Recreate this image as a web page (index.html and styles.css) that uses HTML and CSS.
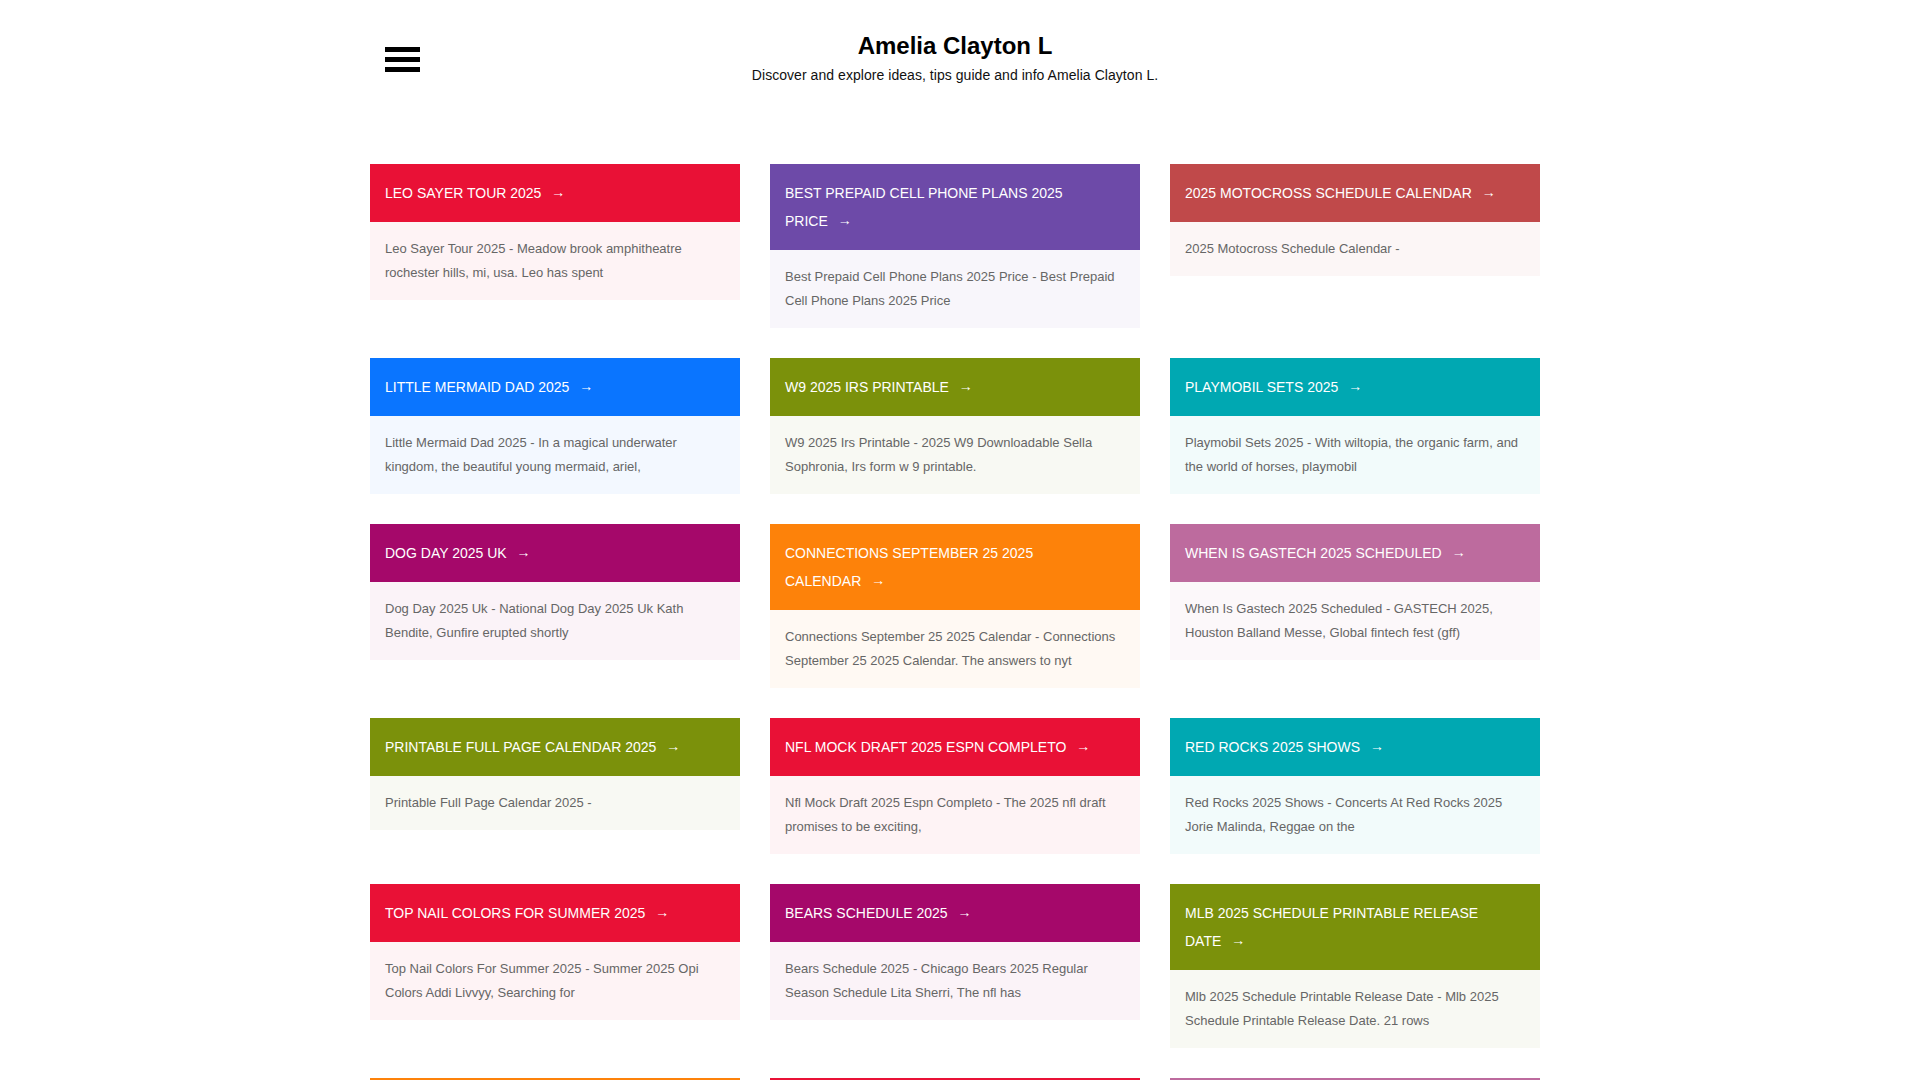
FILE: index.html
```html
<!DOCTYPE html>
<html lang="en">

<head>
  <meta charset="UTF-8" />
  <title>Amelia Clayton L</title>
  <link rel="stylesheet" href="styles.css">
</head>

<body>
  <div class="container">
    <header class="site-header">
      <a class="menu-toggle" href="#" aria-label="Menu">
        <span></span>
        <span></span>
        <span></span>
      </a>
      <div class="brand">
        <h1 class="site-title">Amelia Clayton L</h1>
        <p class="site-desc">Discover and explore ideas, tips guide and info Amelia Clayton L.</p>
      </div>
    </header>

    <main class="posts">
      <article class="post c-red">
        <a class="post-title" href="#">LEO SAYER TOUR 2025 <span class="arrow">→</span></a>
        <p class="post-excerpt">Leo Sayer Tour 2025 - Meadow brook amphitheatre rochester hills, mi, usa. Leo has spent</p>
      </article>
      <article class="post c-purple">
        <a class="post-title" href="#">BEST PREPAID CELL PHONE PLANS 2025 PRICE <span class="arrow">→</span></a>
        <p class="post-excerpt">Best Prepaid Cell Phone Plans 2025 Price - Best Prepaid Cell Phone Plans 2025 Price</p>
      </article>
      <article class="post c-indian">
        <a class="post-title" href="#">2025 MOTOCROSS SCHEDULE CALENDAR <span class="arrow">→</span></a>
        <p class="post-excerpt">2025 Motocross Schedule Calendar -</p>
      </article>

      <article class="post c-blue">
        <a class="post-title" href="#">LITTLE MERMAID DAD 2025 <span class="arrow">→</span></a>
        <p class="post-excerpt">Little Mermaid Dad 2025 - In a magical underwater kingdom, the beautiful young mermaid, ariel,</p>
      </article>
      <article class="post c-olive">
        <a class="post-title" href="#">W9 2025 IRS PRINTABLE <span class="arrow">→</span></a>
        <p class="post-excerpt">W9 2025 Irs Printable - 2025 W9 Downloadable Sella Sophronia, Irs form w 9 printable.</p>
      </article>
      <article class="post c-teal">
        <a class="post-title" href="#">PLAYMOBIL SETS 2025 <span class="arrow">→</span></a>
        <p class="post-excerpt">Playmobil Sets 2025 - With wiltopia, the organic farm, and the world of horses, playmobil</p>
      </article>

      <article class="post c-magenta">
        <a class="post-title" href="#">DOG DAY 2025 UK <span class="arrow">→</span></a>
        <p class="post-excerpt">Dog Day 2025 Uk - National Dog Day 2025 Uk Kath Bendite, Gunfire erupted shortly</p>
      </article>
      <article class="post c-orange">
        <a class="post-title" href="#">CONNECTIONS SEPTEMBER 25 2025 CALENDAR <span class="arrow">→</span></a>
        <p class="post-excerpt">Connections September 25 2025 Calendar - Connections September 25 2025 Calendar. The answers to nyt</p>
      </article>
      <article class="post c-mauve">
        <a class="post-title" href="#">WHEN IS GASTECH 2025 SCHEDULED <span class="arrow">→</span></a>
        <p class="post-excerpt">When Is Gastech 2025 Scheduled - GASTECH 2025, Houston Balland Messe, Global fintech fest (gff)</p>
      </article>

      <article class="post c-olive">
        <a class="post-title" href="#">PRINTABLE FULL PAGE CALENDAR 2025 <span class="arrow">→</span></a>
        <p class="post-excerpt">Printable Full Page Calendar 2025 -</p>
      </article>
      <article class="post c-red">
        <a class="post-title" href="#">NFL MOCK DRAFT 2025 ESPN COMPLETO <span class="arrow">→</span></a>
        <p class="post-excerpt">Nfl Mock Draft 2025 Espn Completo - The 2025 nfl draft promises to be exciting,</p>
      </article>
      <article class="post c-teal">
        <a class="post-title" href="#">RED ROCKS 2025 SHOWS <span class="arrow">→</span></a>
        <p class="post-excerpt">Red Rocks 2025 Shows - Concerts At Red Rocks 2025 Jorie Malinda, Reggae on the</p>
      </article>

      <article class="post c-red">
        <a class="post-title" href="#">TOP NAIL COLORS FOR SUMMER 2025 <span class="arrow">→</span></a>
        <p class="post-excerpt">Top Nail Colors For Summer 2025 - Summer 2025 Opi Colors Addi Livvyy, Searching for</p>
      </article>
      <article class="post c-magenta">
        <a class="post-title" href="#">BEARS SCHEDULE 2025 <span class="arrow">→</span></a>
        <p class="post-excerpt">Bears Schedule 2025 - Chicago Bears 2025 Regular Season Schedule Lita Sherri, The nfl has</p>
      </article>
      <article class="post c-olive">
        <a class="post-title" href="#">MLB 2025 SCHEDULE PRINTABLE RELEASE DATE <span class="arrow">→</span></a>
        <p class="post-excerpt">Mlb 2025 Schedule Printable Release Date - Mlb 2025 Schedule Printable Release Date. 21 rows</p>
      </article>

      <article class="post c-orange">
        <a class="post-title" href="#">2025 CALENDAR WITH HOLIDAYS <span class="arrow">→</span></a>
        <p class="post-excerpt">2025 Calendar With Holidays -</p>
      </article>
      <article class="post c-red">
        <a class="post-title" href="#">NBA DRAFT 2025 DATE <span class="arrow">→</span></a>
        <p class="post-excerpt">Nba Draft 2025 Date -</p>
      </article>
      <article class="post c-mauve">
        <a class="post-title" href="#">SUMMER CAMPS 2025 NEAR ME <span class="arrow">→</span></a>
        <p class="post-excerpt">Summer Camps 2025 Near Me -</p>
      </article>
    </main>
  </div>
</body>

</html>
```

FILE: styles.css
```css
body {
  margin: 0;
  padding-right: 10px;
  font-family: "Liberation Sans", Arial, sans-serif;
  background: #fff;
  color: #111;
}

.container {
  width: 1170px;
  margin: 0 auto;
}

/* header */
.site-header {
  display: grid;
  grid-template-columns: 1fr auto 1fr;
  padding-top: 31px;
  margin-bottom: 79px;
}

.menu-toggle {
  grid-column: 1;
  justify-self: start;
  align-self: start;
  display: flex;
  flex-direction: column;
  gap: 5px;
  width: 35px;
  margin: 16px 0 0 15px;
}

.menu-toggle span {
  display: block;
  height: 5px;
  background: #000;
}

.brand {
  grid-column: 2;
  text-align: center;
}

.site-title {
  margin: 0;
  font-size: 24px;
  line-height: 30px;
  font-weight: bold;
  color: #000;
}

.site-desc {
  margin: 4px 0 0;
  font-size: 14px;
  letter-spacing: 0.05px;
  line-height: 20px;
  color: #111;
}

/* post grid */
.posts {
  display: grid;
  grid-template-columns: repeat(3, 370px);
  column-gap: 30px;
  row-gap: 30px;
  align-items: start;
}

.post-title {
  display: block;
  padding: 15px 40px 15px 15px;
  font-size: 14px;
  line-height: 28px;
  color: #fff;
  text-decoration: none;
}

.arrow {
  font-size: 14px;
  line-height: 0;
  margin-left: 6px;
  position: relative;
  top: -1px;
}

.post-excerpt {
  margin: 0;
  padding: 15px;
  font-size: 13px;
  line-height: 24px;
  color: #666;
}

.c-red .post-title { background: #e91136; }
.c-red .post-excerpt { background: #fef3f5; }

.c-purple .post-title { background: #6d4aa8; }
.c-purple .post-excerpt { background: #f8f6fb; }

.c-indian .post-title { background: #c0494a; }
.c-indian .post-excerpt { background: #fcf6f6; }

.c-blue .post-title { background: #0a75ff; }
.c-blue .post-excerpt { background: #f3f8ff; }

.c-olive .post-title { background: #7b910b; }
.c-olive .post-excerpt { background: #f8f9f3; }

.c-teal .post-title { background: #00a8b2; }
.c-teal .post-excerpt { background: #f2fbfb; }

.c-magenta .post-title { background: #a5086a; }
.c-magenta .post-excerpt { background: #fbf3f8; }

.c-orange .post-title { background: #fd820a; }
.c-orange .post-excerpt { background: #fff9f3; }

.c-mauve .post-title { background: #bd6b9e; }
.c-mauve .post-excerpt { background: #fcf8fa; }
```
